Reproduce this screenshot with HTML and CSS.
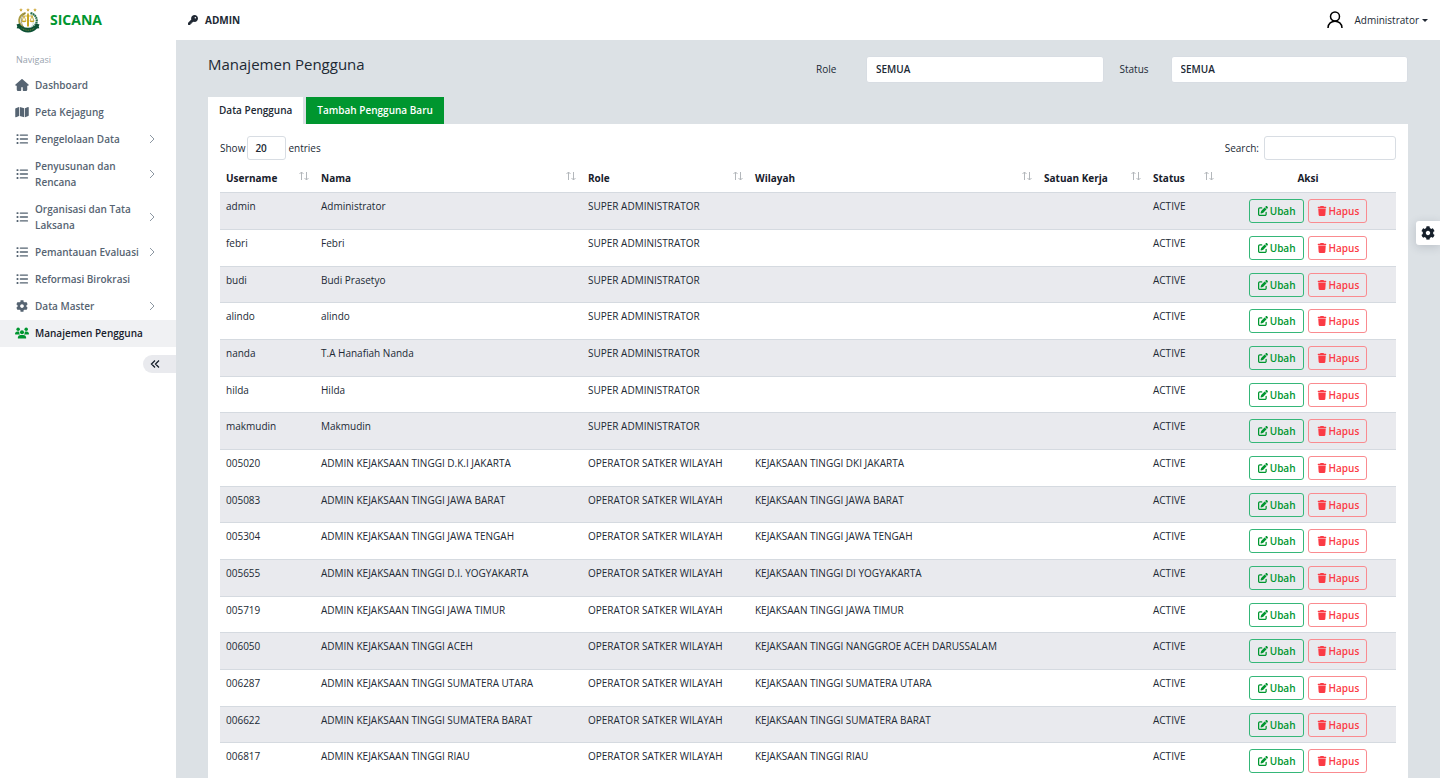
FILE: index.html
```
<!DOCTYPE html>
<html lang="id">
<head>
<meta charset="utf-8">
<meta name="viewport" content="width=device-width, initial-scale=1">
<title>SICANA - Manajemen Pengguna</title>
<link rel="stylesheet" href="styles.css">
</head>
<body>
<svg class="sprite" aria-hidden="true">
  <symbol id="i-home" viewBox="0 0 576 512"><path d="M575.8 255.500c0 18-15 32.100-32 32.100h-32l.7 160.200c0 36-20 64.200-56 64.200H352c-18 0-32-14-32-32V352h-64v128c0 18-14 32-32 32H120c-36 0-56-28-56-64V287.600H32c-18 0-32-14-32-32.100 0-9 3-17 10-24L266.400 8c7-7 15-8 22-8s15 2 21 7l255.400 224.500c8 7 12 15 11 24z"/></symbol>
  <symbol id="i-map" viewBox="0 0 576 512"><path d="M0 125v330c0 17 17 28 33 22l127-50V40L20 95c-12 5-20 17-20 30zM192 40v387l192 54V94zM416 94v387l140-56c12-5 20-17 20-30V65c0-17-17-28-33-22z"/></symbol>
  <symbol id="i-list" viewBox="0 0 512 512"><path d="M40 48h48q16 0 16 16v48q0 16-16 16H40q-16 0-16-16V64q0-16 16-16zm0 168h48q16 0 16 16v48q0 16-16 16H40q-16 0-16-16v-48q0-16 16-16zm0 168h48q16 0 16 16v48q0 16-16 16H40q-16 0-16-16v-48q0-16 16-16zM184 60h304a28 28 0 0 1 0 56H184a28 28 0 0 1 0-56zm0 168h304a28 28 0 0 1 0 56H184a28 28 0 0 1 0-56zm0 168h304a28 28 0 0 1 0 56H184a28 28 0 0 1 0-56z"/></symbol>
  <symbol id="i-gear" viewBox="0 0 512 512"><path d="M487.400 315.700l-42.600-24.600c4.300-23.200 4.300-47 0-70.200l42.600-24.600c4.900-2.800 7.100-8.600 5.500-14-11.100-35.600-30-67.800-54.700-94.600-3.800-4.100-10-5.100-14.800-2.300L380.800 110c-17.900-15.400-38.500-27.300-60.800-35.100V25.800c0-5.600-3.900-10.500-9.400-11.700-36.700-8.200-74.300-7.800-109.200 0-5.500 1.200-9.400 6.100-9.400 11.700V75c-22.200 7.900-42.800 19.800-60.800 35.100L88.700 85.500c-4.900-2.800-11-1.900-14.800 2.300-24.700 26.700-43.600 58.900-54.700 94.600-1.700 5.400.6 11.200 5.500 14L67.300 221c-4.300 23.200-4.300 47 0 70.200l-42.600 24.600c-4.900 2.800-7.100 8.600-5.500 14 11.100 35.600 30 67.800 54.700 94.600 3.800 4.100 10 5.100 14.800 2.300l42.600-24.600c17.900 15.400 38.500 27.300 60.800 35.100v49.200c0 5.600 3.900 10.500 9.400 11.700 36.700 8.200 74.300 7.800 109.200 0 5.500-1.200 9.400-6.100 9.400-11.700v-49.200c22.200-7.900 42.800-19.800 60.800-35.100l42.600 24.600c4.900 2.800 11 1.900 14.800-2.300 24.700-26.700 43.600-58.900 54.700-94.600 1.500-5.500-.7-11.300-5.600-14.100zM256 336c-44.100 0-80-35.900-80-80s35.900-80 80-80 80 35.900 80 80-35.900 80-80 80z"/></symbol>
  <symbol id="i-users" viewBox="0 0 640 512"><circle cx="144" cy="80" r="80"/><circle cx="512" cy="80" r="80"/><circle cx="320" cy="224" r="92"/><path d="M0 298.700C0 239.800 47.800 192 106.700 192h42.700c15.900 0 31 3.500 44.600 9.700-12 66 20 99 42 118H21.300C9.600 320 0 310.400 0 298.700zM405 320c22-19 54-52 42-118 13.600-6.600 28.700-10 44.600-10h42.700C592.200 192 640 239.800 640 298.700c0 11.800-9.600 21.300-21.300 21.300zM128 485.300C128 411.700 187.700 352 261.300 352h117.400C452.300 352 512 411.700 512 485.300c0 14.700-11.900 26.700-26.700 26.700H154.700c-14.700 0-26.700-11.900-26.700-26.700z"/></symbol>
  <symbol id="i-key" viewBox="0 0 512 512"><path d="M336 352c97.200 0 176-78.800 176-176S433.200 0 336 0S160 78.800 160 176c0 18.700 2.900 36.800 8.300 53.700L7 391c-4.500 4.500-7 10.600-7 17v80c0 13.300 10.700 24 24 24h80c13.300 0 24-10.700 24-24V448h40c13.300 0 24-10.700 24-24V384h40c6.400 0 12.500-2.500 17-7l33.300-33.300c16.900 5.400 35 8.300 53.700 8.300zM376 96a40 40 0 1 1 0 80 40 40 0 1 1 0-80z"/></symbol>
  <symbol id="i-edit" viewBox="0 0 512 512"><path d="M471.600 21.700c-21.900-21.900-57.300-21.900-79.200 0L362.300 51.700l97.900 97.900 30.100-30.100c21.900-21.900 21.900-57.300 0-79.200L471.600 21.700zm-299.200 220c-6.100 6.100-10.800 13.600-13.500 21.900l-29.600 88.800c-2.900 8.600-.6 18.100 5.800 24.600s15.900 8.700 24.600 5.800l88.800-29.600c8.200-2.700 15.700-7.400 21.900-13.500L437.700 172.300 339.700 74.300 172.400 241.700zM96 64C43 64 0 107 0 160V416c0 53 43 96 96 96H352c53 0 96-43 96-96V320c0-17.700-14.300-32-32-32s-32 14.300-32 32v96c0 17.700-14.300 32-32 32H96c-17.700 0-32-14.300-32-32V160c0-17.700 14.300-32 32-32h96c17.700 0 32-14.300 32-32s-14.300-32-32-32H96z"/></symbol>
  <symbol id="i-trash" viewBox="0 0 448 512"><path d="M135.200 17.700L128 32H32C14.300 32 0 46.300 0 64S14.300 96 32 96H416c17.700 0 32-14.300 32-32s-14.300-32-32-32H320l-7.200-14.300C307.400 6.800 296.300 0 284.200 0H163.800c-12.100 0-23.200 6.800-28.600 17.700zM416 128H32L53.200 467c1.600 25.300 22.600 45 47.900 45H346.900c25.300 0 46.300-19.700 47.900-45L416 128z"/></symbol>
  <symbol id="i-chev" viewBox="0 0 8 10"><path d="M2 1l4 4-4 4" fill="none" stroke="currentColor"/></symbol>
  <symbol id="i-sort" viewBox="0 0 10 10"><path d="M2.500 9V1M.5 3l2-2 2 2M7.500 1v8M5.500 7l2 2 2-2" fill="none" stroke="currentColor"/></symbol>
</svg>

<div class="app">
  <aside class="sidebar">
    <a class="brand" href="#">
      <svg class="brand-logo" viewBox="0 0 24 26" aria-hidden="true">
        <path d="M5 1l.6 1.200 1.200.2-.9.900.2 1.200L5 4l-1.100.5.2-1.200-.9-.9 1.200-.2zM12 1l.6 1.200 1.200.2-.9.900.2 1.200L12 4l-1.100.5.2-1.200-.9-.9 1.200-.2zM19 1l.6 1.200 1.200.2-.9.900.2 1.200L19 4l-1.100.5.2-1.200-.9-.9 1.200-.2z" fill="#d2ad45"/>
        <path d="M9.500 6C1.500 8.500 1.500 17 7.500 20.500" fill="none" stroke="#a99b42" stroke-width="2"/>
        <path d="M9.500 6C4.500 9 4.500 16 7.500 20" fill="none" stroke="#5d6131" stroke-width=".6"/>
        <path d="M14.500 6c8 2.500 8 11 2 14.500" fill="none" stroke="#276d48" stroke-width="2.200" stroke-dasharray="1.800 .5"/>
        <path d="M14 7c4.500 3 4.500 10 1 13" fill="none" stroke="#c9ded0" stroke-width="1"/>
        <path d="M12 5.500l1 2v11l-1 2-1-2v-11z" fill="#c6a522"/>
        <path d="M7 9h10M8 9l-2 5h4zM16 9l-2 5h4z" fill="none" stroke="#c6a522" stroke-width=".8"/>
        <path d="M5.500 14h5q-2.500 2.500-5 0zM13.500 14h5q-2.500 2.500-5 0z" fill="#c6a522"/>
        <path d="M.5 17.500l3-1c1.500 3 4.500 4.300 8.500 4.300s7-1.300 8.500-4.300l3 1-.8 1.700.6 2-2.300.3C18.500 24 15.500 25.500 12 25.500S5.500 24 3 21.500l-2.300-.3.600-2z" fill="#0c5135"/>
        <path d="M5.500 21c3.500 3 9.500 3 13 0" fill="none" stroke="#9c943a" stroke-width=".8" stroke-dasharray="1 .8"/>
      </svg>
      <span>SICANA</span>
    </a>
    <nav class="nav" aria-label="Navigasi">
      <p class="nav-title">Navigasi</p>
      <a class="nav-item" href="#"><svg class="nav-icon"><use href="#i-home"/></svg><span>Dashboard</span></a>
      <a class="nav-item" href="#"><svg class="nav-icon"><use href="#i-map"/></svg><span>Peta Kejagung</span></a>
      <a class="nav-item" href="#"><svg class="nav-icon"><use href="#i-list"/></svg><span>Pengelolaan Data</span><svg class="chev"><use href="#i-chev"/></svg></a>
      <a class="nav-item" href="#"><svg class="nav-icon"><use href="#i-list"/></svg><span>Penyusunan dan Rencana</span><svg class="chev"><use href="#i-chev"/></svg></a>
      <a class="nav-item" href="#"><svg class="nav-icon"><use href="#i-list"/></svg><span>Organisasi dan Tata Laksana</span><svg class="chev"><use href="#i-chev"/></svg></a>
      <a class="nav-item" href="#"><svg class="nav-icon"><use href="#i-list"/></svg><span>Pemantauan Evaluasi</span><svg class="chev"><use href="#i-chev"/></svg></a>
      <a class="nav-item" href="#"><svg class="nav-icon"><use href="#i-list"/></svg><span>Reformasi Birokrasi</span></a>
      <a class="nav-item" href="#"><svg class="nav-icon"><use href="#i-gear"/></svg><span>Data Master</span><svg class="chev"><use href="#i-chev"/></svg></a>
      <a class="nav-item active" href="#" aria-current="page"><svg class="nav-icon"><use href="#i-users"/></svg><span>Manajemen Pengguna</span></a>
    </nav>
    <button class="collapse" type="button" aria-label="Tutup navigasi"><svg viewBox="0 0 10 10" aria-hidden="true"><path d="M5 1.500L1.500 5 5 8.500M9 1.500L5.500 5 9 8.500"/></svg></button>
  </aside>

  <header class="topbar">
    <div class="role-tag"><svg><use href="#i-key"/></svg><span>ADMIN</span></div>
    <button class="user" type="button">
      <svg class="avatar" viewBox="0 0 16 18" aria-hidden="true"><circle cx="8" cy="5.500" r="4.500"/><path d="M1 17c0-9 14-9 14 0"/></svg>
      <span>Administrator</span><i class="caret"></i>
    </button>
  </header>

  <main class="content">
    <div class="page-head">
      <h1>Manajemen Pengguna</h1>
      <form class="filters">
        <label for="role">Role</label>
        <select id="role"><option>SEMUA</option></select>
        <label for="status">Status</label>
        <select id="status"><option>SEMUA</option></select>
      </form>
    </div>
    <div class="tabs" role="tablist">
      <button class="tab selected" type="button" role="tab" aria-selected="true">Data Pengguna</button>
      <button class="tab add" type="button" role="tab" aria-selected="false">Tambah Pengguna Baru</button>
    </div>
    <section class="card">
      <div class="tools">
        <label class="length">Show <select><option>20</option></select> entries</label>
        <label class="search">Search: <input type="search"></label>
      </div>
      <table class="users">
        <colgroup><col class="c-user"><col class="c-name"><col class="c-role"><col class="c-area"><col class="c-unit"><col class="c-status"><col class="c-action"></colgroup>
        <thead><tr>
          <th><div class="th">Username<svg><use href="#i-sort"/></svg></div></th>
          <th><div class="th">Nama<svg><use href="#i-sort"/></svg></div></th>
          <th><div class="th">Role<svg><use href="#i-sort"/></svg></div></th>
          <th><div class="th">Wilayah<svg><use href="#i-sort"/></svg></div></th>
          <th><div class="th">Satuan Kerja<svg><use href="#i-sort"/></svg></div></th>
          <th><div class="th">Status<svg><use href="#i-sort"/></svg></div></th>
          <th class="center">Aksi</th>
        </tr></thead>
        <tbody id="rows"></tbody>
      </table>
    </section>
  </main>
</div>
<button class="settings" type="button" aria-label="Pengaturan"><svg><use href="#i-gear"/></svg></button>
<script src="app.js"></script>
</body>
</html>
```

FILE: styles.css
```
* { box-sizing: border-box; }
body {
  margin: 0;
  font: 400 10px/16px "Open Sans", "Noto Sans", sans-serif;
  color: #212934;
  background: #dce1e5;
  overflow: hidden;
}
button, select, input { font: inherit; color: inherit; margin: 0; }
button { cursor: pointer; }
a { color: inherit; text-decoration: none; }
svg { display: block; flex: none; fill: currentColor; }
.sprite { position: absolute; width: 0; height: 0; }

.app {
  display: grid;
  grid-template: 40px 1fr / 176px 1fr;
  height: 100vh;
}

.sidebar {
  grid-row: 1 / 3;
  display: flex;
  flex-direction: column;
  background: #fff;
}
.brand {
  display: flex;
  align-items: center;
  gap: 10px;
  height: 40px;
  padding-left: 16px;
  font-size: 14px;
  font-weight: 700;
  color: #00962f;
}
.brand-logo { width: 24px; height: 26px; }
.nav-title { margin: 0; padding: 12px 16px 4px; color: #98a3ae; font-size: 9px; }
.nav-item {
  display: flex;
  align-items: center;
  gap: 6px;
  padding: 5px 20px 6px 15px;
  color: #566472;
  font-weight: 600;
}
.nav-item span { flex: 1; }
.nav-icon { width: 14px; height: 12px; }
.chev { width: 8px; height: 10px; color: #8c97a2; }
.nav-item.active { background: #f0f1f3; color: #17202b; }
.active .nav-icon { color: #00962f; }
.collapse {
  align-self: flex-end;
  width: 33px;
  height: 18px;
  margin-top: 8px;
  padding: 0 0 0 7px;
  border: 0;
  border-radius: 9px 0 0 9px;
  background: #e9eaee;
}
.collapse svg { width: 10px; height: 10px; fill: none; stroke: #17202b; stroke-width: 1.3; }

.topbar {
  display: flex;
  align-items: center;
  justify-content: space-between;
  padding: 0 12px;
  background: #fff;
}
.role-tag { display: flex; align-items: center; gap: 7px; font-weight: 700; }
.role-tag svg { width: 10px; height: 10px; }
.user {
  display: flex;
  align-items: center;
  padding: 0;
  border: 0;
  background: none;
}
.avatar { width: 16px; height: 18px; margin-right: 11px; fill: none; stroke: #000; stroke-width: 1.500; }
.caret { margin-left: 3px; border: 3px solid transparent; border-top-color: currentColor; border-bottom: 0; }

.content { min-width: 0; overflow: hidden; padding: 16px 32px 0; }
.page-head { display: flex; justify-content: space-between; height: 41px; }
h1 { margin: 0; font-size: 15px; line-height: 16px; font-weight: 500; }
.filters {
  display: grid;
  grid-template-columns: 34px 1fr 35px 1fr;
  gap: 16px;
  width: 592px;
  align-items: start;
}
.filters label { line-height: 26px; }
select {
  appearance: none;
  border: 1px solid #d8dde3;
  border-radius: 3px;
  background: #fff;
  font-weight: 600;
}
.filters select { height: 27px; padding: 0 9px 2px; }

.tabs { display: flex; gap: 3px; }
.tab { height: 27px; padding: 0 11px 1px; border: 0; font-weight: 600; }
.tab.selected { background: #fff; }
.tab.add { background: #00962f; color: #fff; }

.card { background: #fff; padding: 12px; }
.tools { display: flex; justify-content: space-between; height: 24px; }
.tools label { display: flex; align-items: center; }
.length { gap: 2px; }
.length select { width: 39px; height: 24px; padding: 0 7px; }
.search { gap: 5px; }
.search input {
  width: 132px;
  height: 24px;
  border: 1px solid #d8dde3;
  border-radius: 3px;
  background: #fff;
}

.users { width: 100%; margin-top: 5px; border-collapse: separate; border-spacing: 0; table-layout: fixed; }
.c-user { width: 95px; }
.c-name { width: 267px; }
.c-role { width: 167px; }
.c-area { width: 289px; }
.c-unit { width: 109px; }
.c-status { width: 73px; }
.c-action { width: 176px; }
th, td { padding: 0 6px; text-align: left; border-bottom: 1px solid #d5dae0; }
th { height: 28px; padding-bottom: 2px; font-weight: 700; color: #17202b; white-space: nowrap; }
.th { display: flex; justify-content: space-between; }
.th svg { width: 10px; height: 10px; margin-top: 1px; color: #b3b7bb; }
.center { text-align: center; }
td { height: 37px; padding-top: 5px; vertical-align: top; }
tr:nth-child(3n) td { height: 36px; }
tbody tr:nth-child(odd) { background: #e9eaee; }
.actions { display: flex; justify-content: center; gap: 4px; padding-top: 1px; }
.btn {
  display: flex;
  align-items: center;
  gap: 2px;
  height: 24px;
  padding: 0 7px 1px 8px;
  border: 1px solid;
  border-radius: 3px;
  background: none;
  font-weight: 600;
}
.btn svg { width: 10px; height: 10px; }
.edit { color: #00962f; border-color: #35b779; }
.delete { color: #fb3b45; border-color: #fa8b90; }

.settings {
  position: fixed;
  top: 221px;
  right: 0;
  width: 24px;
  height: 24px;
  padding: 0 5px;
  border: 0;
  border-radius: 3px 0 0 3px;
  background: #fff;
  box-shadow: 0 2px 10px rgba(40, 50, 70, .18);
}
.settings svg { width: 14px; height: 14px; color: #17202b; }
```

FILE: app.js
```
const SUPER = 'SUPER ADMINISTRATOR';
const OPERATOR = 'OPERATOR SATKER WILAYAH';
const users = [
  ['admin', 'Administrator', SUPER, ''],
  ['febri', 'Febri', SUPER, ''],
  ['budi', 'Budi Prasetyo', SUPER, ''],
  ['alindo', 'alindo', SUPER, ''],
  ['nanda', 'T.A Hanafiah Nanda', SUPER, ''],
  ['hilda', 'Hilda', SUPER, ''],
  ['makmudin', 'Makmudin', SUPER, ''],
  ['005020', 'ADMIN KEJAKSAAN TINGGI D.K.I JAKARTA', OPERATOR, 'KEJAKSAAN TINGGI DKI JAKARTA'],
  ['005083', 'ADMIN KEJAKSAAN TINGGI JAWA BARAT', OPERATOR, 'KEJAKSAAN TINGGI JAWA BARAT'],
  ['005304', 'ADMIN KEJAKSAAN TINGGI JAWA TENGAH', OPERATOR, 'KEJAKSAAN TINGGI JAWA TENGAH'],
  ['005655', 'ADMIN KEJAKSAAN TINGGI D.I. YOGYAKARTA', OPERATOR, 'KEJAKSAAN TINGGI DI YOGYAKARTA'],
  ['005719', 'ADMIN KEJAKSAAN TINGGI JAWA TIMUR', OPERATOR, 'KEJAKSAAN TINGGI JAWA TIMUR'],
  ['006050', 'ADMIN KEJAKSAAN TINGGI ACEH', OPERATOR, 'KEJAKSAAN TINGGI NANGGROE ACEH DARUSSALAM'],
  ['006287', 'ADMIN KEJAKSAAN TINGGI SUMATERA UTARA', OPERATOR, 'KEJAKSAAN TINGGI SUMATERA UTARA'],
  ['006622', 'ADMIN KEJAKSAAN TINGGI SUMATERA BARAT', OPERATOR, 'KEJAKSAAN TINGGI SUMATERA BARAT'],
  ['006817', 'ADMIN KEJAKSAAN TINGGI RIAU', OPERATOR, 'KEJAKSAAN TINGGI RIAU']
];
const actions = `<div class="actions">
  <button class="btn edit" type="button"><svg><use href="#i-edit"/></svg>Ubah</button>
  <button class="btn delete" type="button"><svg><use href="#i-trash"/></svg>Hapus</button>
</div>`;
document.getElementById('rows').innerHTML = users.map(([username, name, role, area]) =>
  `<tr><td>${username}</td><td>${name}</td><td>${role}</td><td>${area}</td><td></td><td>ACTIVE</td><td>${actions}</td></tr>`
).join('');
```
